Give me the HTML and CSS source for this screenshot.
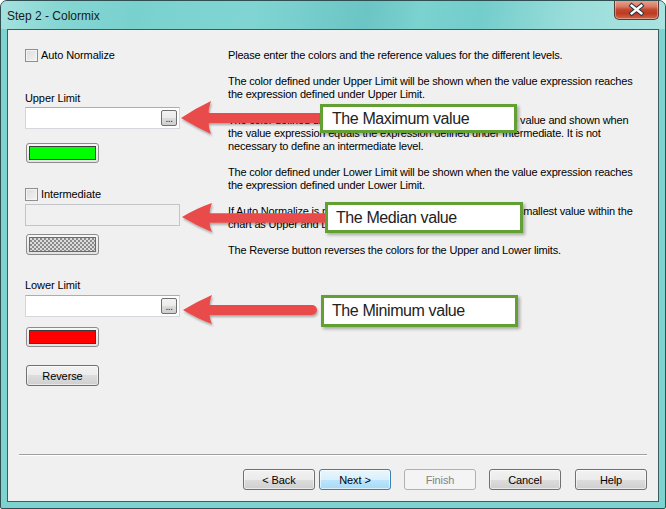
FILE: index.html
```html
<!DOCTYPE html>
<html>
<head>
<meta charset="utf-8">
<link rel="stylesheet" href="styles.css">
</head>
<body>
<div class="window">
  <div class="titlebar">
    <span class="title">Step 2 - Colormix</span>
    <div class="close">
      <svg width="45" height="19" viewBox="0 0 45 19">
        <path d="M17.5 5.5 L27.5 13.5 M27.5 5.5 L17.5 13.5" stroke="#2b3440" stroke-width="4.6" stroke-linecap="square" fill="none"/>
        <path d="M17.5 5.5 L27.5 13.5 M27.5 5.5 L17.5 13.5" stroke="#ffffff" stroke-width="2.6" stroke-linecap="square" fill="none"/>
      </svg>
    </div>
  </div>
  <div class="client">
    <div class="main">
      <div class="leftcol">
        <label class="check cb-auto"><span class="box"></span>Auto Normalize</label>
        <div class="lbl lbl-upper">Upper Limit</div>
        <div class="input inp-upper"><span class="dots">...</span></div>
        <div class="swatch sw-green"><span class="fill green"></span></div>
        <label class="check cb-inter"><span class="box"></span>Intermediate</label>
        <div class="input disabled inp-inter"></div>
        <div class="swatch sw-hatch"><span class="fill hatch"></span></div>
        <div class="lbl lbl-lower">Lower Limit</div>
        <div class="input inp-lower"><span class="dots">...</span></div>
        <div class="swatch sw-red"><span class="fill red"></span></div>
        <button class="btn reverse">Reverse</button>
      </div>
      <div class="text">
        <p>Please enter the colors and the reference values for the different levels.</p>
        <p>The color defined under Upper Limit will be shown when the value expression reaches<br>the expression defined under Upper Limit.</p>
        <p>The color defined under Intermediate will be used as a middle value and shown when<br>the value expression equals the expression defined under Intermediate. It is not<br>necessary to define an intermediate level.</p>
        <p>The color defined under Lower Limit will be shown when the value expression reaches<br>the expression defined under Lower Limit.</p>
        <p>If Auto Normalize is marked, QlikView will use the largest and smallest value within the<br>chart as Upper and Lower Limit.</p>
        <p>The Reverse button reverses the colors for the Upper and Lower limits.</p>
      </div>
    </div>
    <div class="footer">
      <div class="sep"></div>
      <div class="buttons">
        <button class="btn">&lt; Back</button>
        <button class="btn default">Next &gt;</button>
        <button class="btn disabled gap">Finish</button>
        <button class="btn gap">Cancel</button>
        <button class="btn gap">Help</button>
      </div>
    </div>

    <svg class="arrows" width="170" height="240" viewBox="0 0 170 240">
      <defs>
        <filter id="sh" x="-10%" y="-20%" width="130%" height="160%">
          <feDropShadow dx="1" dy="2" stdDeviation="1.2" flood-color="#000" flood-opacity="0.3"/>
        </filter>
      </defs>
      <g fill="#e84c4a" stroke="#e84c4a" filter="url(#sh)">
        <path d="M6 23 Q21 13 36 6 Q33 15 34 18 L34 28 Q33 31 36 39 Q21 32 6 23 Z" stroke="none"/>
        <line x1="34" y1="23" x2="148" y2="23" stroke-width="10" stroke-linecap="round"/>
        <path d="M7 122 Q22 113 37 108 Q34 116 35 119 L35 127 Q34 130 37 137 Q22 131 7 122 Z" stroke="none"/>
        <line x1="35" y1="123" x2="152" y2="123" stroke-width="9.5" stroke-linecap="round"/>
        <path d="M8 215 Q23 206 37 200 Q34 208 35 211 L35 219 Q34 222 37 229 Q23 224 8 215 Z" stroke="none"/>
        <line x1="35" y1="215" x2="137" y2="215" stroke-width="10" stroke-linecap="round"/>
      </g>
    </svg>

    <div class="callout c-max">The Maximum value</div>
    <div class="callout c-med">The Median value</div>
    <div class="callout c-min">The Minimum value</div>
  </div>
</div>
</body>
</html>
```
FILE: styles.css
```css
* { box-sizing: border-box; }
html, body { margin: 0; padding: 0; background: #ffffff; }
body { font-family: "Liberation Sans", Arial, sans-serif; font-size: 11px; color: #000; }

.window {
  width: 666px;
  height: 509px;
  border: 1px solid #2f4f52;
  border-radius: 7px 7px 2px 2px;
  background: #7dd3d0;
  display: flex;
  flex-direction: column;
  overflow: hidden;
  position: relative;
}

.titlebar {
  height: 28px;
  display: flex;
  align-items: flex-start;
  background: linear-gradient(100deg, #a6e2df 0%, #86d6d3 9%, #79d1ce 20%, #80d5d2 38%, #6bc5c4 55%, #7bd2cf 63%, #73cdcb 72%, #9bdedb 86%, #a9e3e0 100%);
}
.title {
  font-family: "Liberation Sans", Arial, sans-serif;
  font-size: 12px;
  color: #1a1a1a;
  padding-left: 6px;
  padding-top: 8px;
  line-height: 14px;
}
.close {
  margin-left: auto;
  margin-right: 6px;
  margin-top: -1px;
  width: 45px;
  height: 20px;
  border: 1px solid #5a3a36;
  border-top: none;
  border-radius: 0 0 5px 5px;
  background: linear-gradient(#e9a894 0%, #d97862 35%, #c44a2f 50%, #bd3a20 70%, #d0674c 100%);
  box-shadow: inset 0 0 0 1px rgba(255,255,255,0.35);
  display: flex;
}
.close svg { display: block; }

.client {
  margin: 0 6px;
  height: 473px;
  border: 1px solid #3e5b5e;
  background: #f0f0f0;
  display: flex;
  flex-direction: column;
  position: relative;
}

.main {
  flex: 1;
  display: flex;
  padding-top: 19px;
}

.leftcol {
  width: 220px;
  padding-left: 17px;
  display: flex;
  flex-direction: column;
  align-items: flex-start;
  letter-spacing: -0.1px;
}

.check {
  display: flex;
  align-items: center;
  height: 13px;
  line-height: 13px;
  gap: 3px;
}
.check .box {
  width: 13px;
  height: 13px;
  border: 1px solid #8e8f8f;
  background: linear-gradient(135deg, #dcdcdc 0%, #f4f4f4 100%);
  box-shadow: inset 0 0 0 1px #f4f4f4;
}
.cb-auto { margin-top: 0; }
.cb-inter { margin-top: 25px; }

.lbl { line-height: 13px; height: 13px; }
.lbl-upper { margin-top: 30px; }
.lbl-lower { margin-top: 24px; }

.input {
  width: 155px;
  height: 22px;
  background: #ffffff;
  border: 1px solid #d5d7dc;
  border-top-color: #abadb3;
  display: flex;
  justify-content: flex-end;
  align-items: flex-start;
  padding: 2px 2px 0 0;
}
.inp-upper { margin-top: 2px; }
.inp-lower { margin-top: 3px; }
.inp-inter { margin-top: 3px; }
.input.disabled { background: #f0f0f0; border-color: #c2c4c8; }

.dots {
  width: 16px;
  height: 16px;
  border: 1px solid #707070;
  border-radius: 2px;
  background: linear-gradient(#f2f2f2 0%, #ebebeb 50%, #dddddd 50%, #cfcfcf 100%);
  font-size: 10px;
  line-height: 16px;
  text-align: center;
  letter-spacing: -0.5px;
  color: #222;
}

.swatch {
  margin-left: 1px;
  width: 73px;
  height: 20px;
  border: 1px solid #8c8c8c;
  border-radius: 3px;
  background: linear-gradient(#f7f7f7, #e2e2e2);
  padding: 2px;
  display: flex;
}
.sw-green { margin-top: 14px; }
.sw-hatch { margin-top: 8px; height: 21px; }
.sw-red { margin-top: 10px; }
.fill { flex: 1; border: 1px solid #3c3c3c; }
.green { background: #00ff00; }
.red { background: #ff0000; }
.hatch {
  border-color: #6a6a6a;
  background: repeating-conic-gradient(#8c8c8c 0 25%, #dcdcdc 0 50%) 0 0 / 4px 4px;
}

.btn {
  font-family: "Liberation Sans", Arial, sans-serif;
  font-size: 11px;
  letter-spacing: -0.1px;
  color: #000;
  width: 72px;
  height: 21px;
  padding: 0;
  border: 1px solid #707070;
  border-radius: 3px;
  background: linear-gradient(#f2f2f2 0%, #ebebeb 50%, #dddddd 50%, #cfcfcf 100%);
  box-shadow: inset 0 0 0 1px rgba(255,255,255,0.55);
}
.reverse { margin-top: 18px; margin-left: 1px; width: 73px; }
.btn.default {
  border-color: #3c7fb1;
  background: linear-gradient(#eaf6fd 0%, #d9f0fc 50%, #bee6fd 50%, #a7d9f5 100%);
  box-shadow: inset 0 0 0 1px rgba(255,255,255,0.6);
}
.btn.disabled {
  border-color: #adb2b5;
  background: #f4f4f4;
  color: #838383;
  box-shadow: none;
}

.text { flex: 1; letter-spacing: -0.18px; }
.text p {
  margin: 0 0 13px 0;
  line-height: 13px;
  white-space: nowrap;
}

.footer {
  padding: 0 11px 11px 11px;
}
.sep {
  height: 2px;
  border-top: 1px solid #a0a0a0;
  border-bottom: 1px solid #ffffff;
}
.buttons {
  margin-top: 13px;
  display: flex;
  justify-content: flex-end;
  gap: 4px;
}
.buttons .gap { margin-left: 9px; }
.buttons .gap:last-child { margin-left: 10px; }

.arrows {
  position: absolute;
  left: 167px;
  top: 65px;
}

.callout {
  position: absolute;
  border: 3px solid #62a034;
  background: #ffffff;
  font-family: "Liberation Sans", Arial, sans-serif;
  font-size: 16px;
  letter-spacing: -0.4px;
  color: #222;
  padding-left: 9px;
  display: flex;
  align-items: center;
  box-shadow: 2px 2px 3px rgba(0,0,0,0.3);
}
.c-max { left: 312px; top: 74px; width: 197px; height: 29px; }
.c-med { left: 317px; top: 172px; width: 198px; height: 31px; padding-left: 8px; }
.c-min { left: 313px; top: 265px; width: 197px; height: 32px; padding-left: 8px; }
```
